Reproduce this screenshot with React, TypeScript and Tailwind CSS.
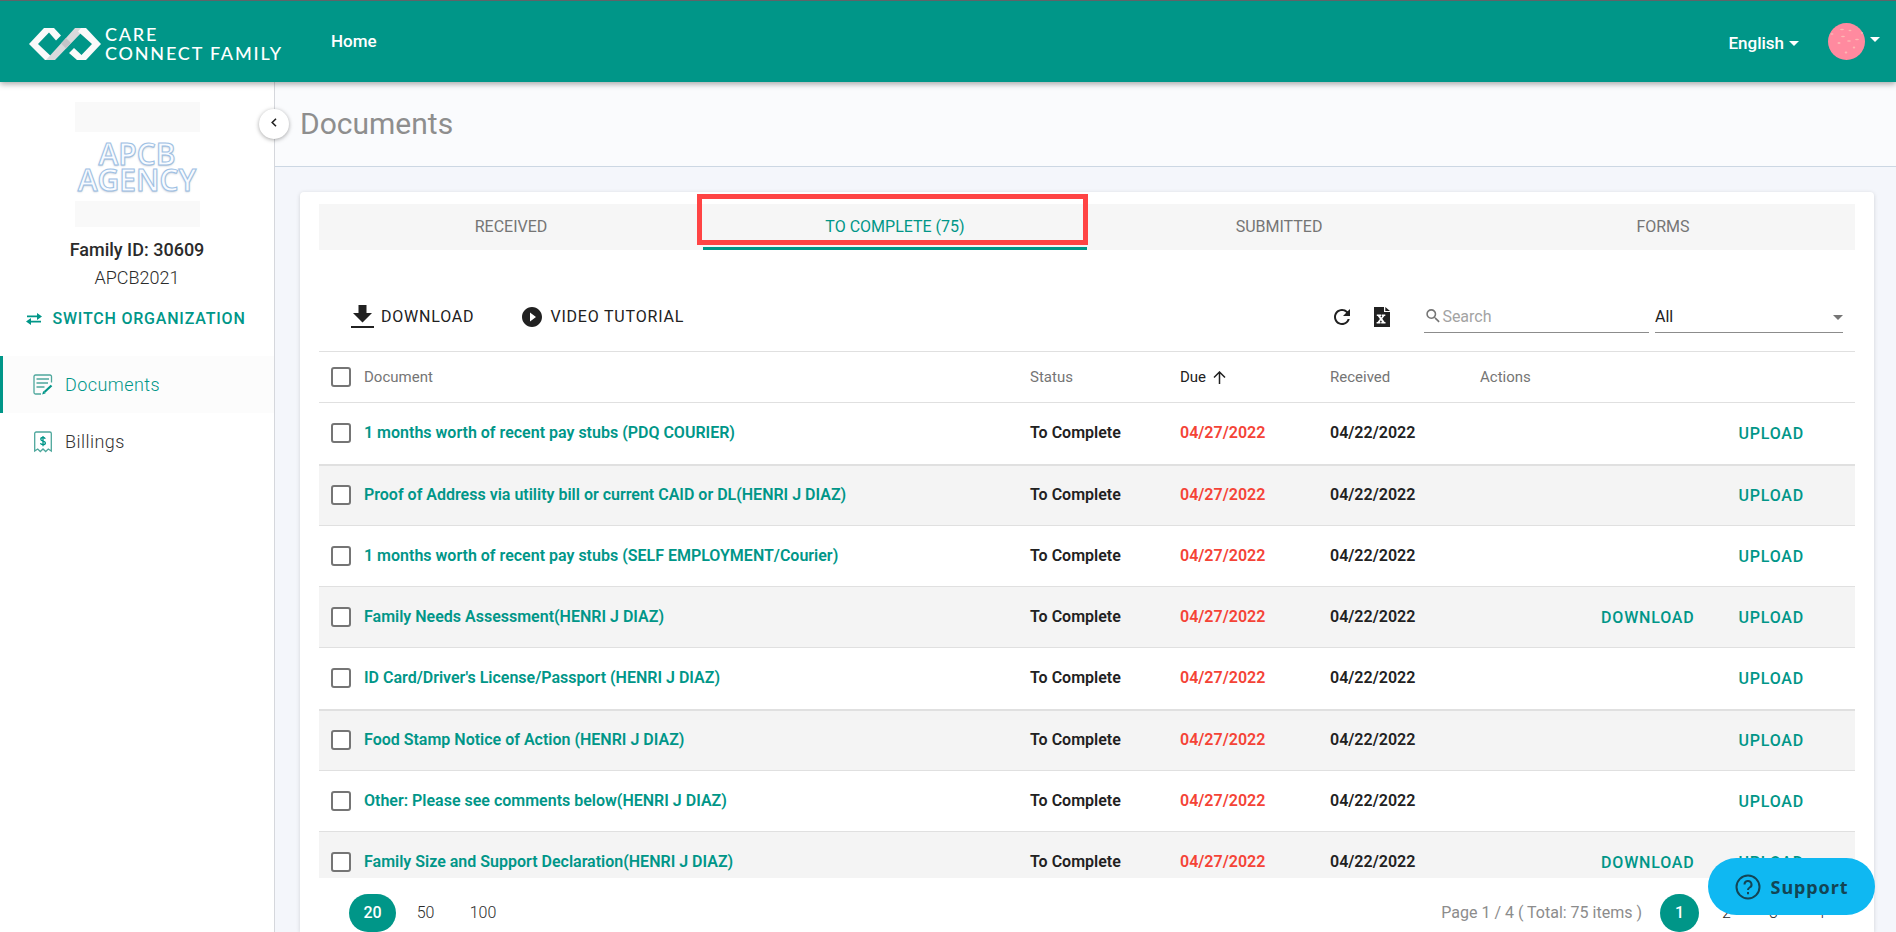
import type { ReactNode } from 'react';
import { MdPlayCircleFilled, MdRefresh, MdSearch } from 'react-icons/md';

interface DocumentRow {
  name: string;
  download?: boolean;
}

const documents: DocumentRow[] = [
  { name: '1 months worth of recent pay stubs (PDQ COURIER)' },
  { name: 'Proof of Address via utility bill or current CAID or DL(HENRI J DIAZ)' },
  { name: '1 months worth of recent pay stubs (SELF EMPLOYMENT/Courier)' },
  { name: 'Family Needs Assessment(HENRI J DIAZ)', download: true },
  { name: "ID Card/Driver's License/Passport (HENRI J DIAZ)" },
  { name: 'Food Stamp Notice of Action (HENRI J DIAZ)' },
  { name: 'Other: Please see comments below(HENRI J DIAZ)' },
  { name: 'Family Size and Support Declaration(HENRI J DIAZ)', download: true },
];

const tabs = ['RECEIVED', 'TO COMPLETE (75)', 'SUBMITTED', 'FORMS'];

function Caret({ className }: { className: string }) {
  return (
    <svg viewBox="0 0 10 5" className={className} fill="currentColor" aria-hidden>
      <path d="M0 0h10L5 5z" />
    </svg>
  );
}

function Logo() {
  return (
    <a href="#" className="ml-[29px] mt-1 flex items-center gap-1">
      <svg viewBox="0 0 72 32" className="h-8 w-[72px]" aria-hidden>
        <path d="M15 0H25L32 7.500 27 12.500 20 4.500 9 16 26 32H16L0 16z" fill="#fafafa" />
        <path d="M17 32 46 0H57L53 4 26 32z" fill="#d9dadc" />
        <path d="M32 15.500 37 10 42 15 37 20.500z" fill="#c3c5c8" />
        <path d="M57 32H48L40 25 45 20 52.500 27 63 16 49 3.500 52 0H57L72 16z" fill="#fafafa" />
      </svg>
      <span className="flex flex-col font-[Lato] text-lg leading-[19px] font-medium tracking-widest text-white">
        <span>CARE</span>
        <span>CONNECT FAMILY</span>
      </span>
    </a>
  );
}

function Header() {
  return (
    <header className="relative z-20 flex h-[82px] shrink-0 items-center border-t border-[#5f6368] bg-[#009688] text-white shadow-[0_2px_6px_rgba(0,0,0,0.35)]">
      <Logo />
      <a href="#" className="ml-12 text-[17px] font-medium">Home</a>
      <button type="button" className="ml-auto mt-1 flex items-center gap-[5px] text-[17px] font-medium">
        English
        <Caret className="h-[5px] w-[10px]" />
      </button>
      <button type="button" aria-label="Account" className="ml-[29px] mr-4 flex items-center gap-[5px]">
        <svg viewBox="0 0 37 37" className="size-[37px]" aria-hidden>
          <circle cx="18.500" cy="18.500" r="18.500" fill="#ff8a9f" />
          <g fill="#fcb9b4">
            <ellipse cx="14" cy="6.500" rx="2" ry=".8" />
            <ellipse cx="22" cy="7.500" rx="1.500" ry=".8" />
            <ellipse cx="15" cy="13.500" rx="2" ry=".8" />
            <ellipse cx="21" cy="18" rx="2" ry=".8" />
            <ellipse cx="29" cy="16.500" rx="2" ry=".8" />
            <ellipse cx="11" cy="20" rx="1.500" ry=".9" />
            <ellipse cx="26" cy="24.500" rx="1.200" ry=".9" />
            <ellipse cx="18" cy="29.500" rx="1.300" ry=".9" />
            <ellipse cx="4" cy="11" rx="1.500" ry=".8" />
            <ellipse cx="34" cy="10" rx="1.200" ry=".8" />
          </g>
        </svg>
        <Caret className="mb-1 h-[5px] w-[10px]" />
      </button>
    </header>
  );
}

function DocumentIcon() {
  return (
    <svg viewBox="0 0 20 22" className="h-[22px] w-5" fill="none" stroke="#4da79c" strokeWidth="1.300" aria-hidden>
      <path d="M18.500 8.500V2.500A1.500 1.500 0 0 0 17 1H2.500A1.500 1.500 0 0 0 1 2.500v16A1.500 1.500 0 0 0 2.500 20H8M3.500 5H16M3.500 9H15M3.500 13h8" />
      <path d="M18.500 11.500 11.500 18" stroke="#009688" strokeWidth="2.200" />
      <path d="M9.200 20.500l1-3.500 2.500 2.300z" fill="#009688" stroke="none" />
    </svg>
  );
}

function BillingIcon() {
  return (
    <svg viewBox="0 0 20 22" className="h-[22px] w-5" fill="none" stroke="#4da79c" strokeWidth="1.300" aria-hidden>
      <path d="M1.700 20V2.500A1.500 1.500 0 0 1 3.200 1h13.600a1.500 1.500 0 0 1 1.500 1.500V20l-3-2-2.600 2.500L10 18l-2.700 2.500L4.700 18z" />
      <path
        d="M12.200 7.800C12 6.800 11.200 6.500 10 6.500c-1.300 0-2.200.6-2.200 1.700 0 2.500 4.600 1.300 4.600 3.700 0 1.200-1 1.800-2.400 1.800-1.400 0-2.300-.5-2.500-1.600M10 5v10.300"
        stroke="#009688"
      />
    </svg>
  );
}

function SwitchIcon() {
  return (
    <svg viewBox="0 0 16 12" className="h-3 w-4" fill="currentColor" aria-hidden>
      <path d="M1 2.500h10V0l5 3.500L11 7V4.300H1zM15 7.700H5V5L0 8.500 5 12V9.500h10z" />
    </svg>
  );
}

function ExcelIcon() {
  return (
    <svg viewBox="0 0 16 20" className="h-5 w-4" aria-hidden>
      <path d="M0 0h10v5h6v15H0zM11.300 0 16 4H11.300z" fill="currentColor" />
      <path
        d="M2.800 7.500H7v1.400h-.7L7.300 10.500l1.100-1.600h-.8V7.500h3.700v1.400h-.9L8.300 11.800l2.300 3.300h.9v1.400H7.200v-1.400H8L6.900 13.300 5.700 15.100h.8v1.400H2.600v-1.400h1L5.900 11.900 3.800 8.900h-1z"
        fill="#fff"
      />
    </svg>
  );
}

function Sidebar() {
  return (
    <aside className="relative z-10 w-[275px] shrink-0 border-r border-[#d5d7dc] bg-white">
      <button
        type="button"
        aria-label="Collapse menu"
        className="absolute -right-[15px] top-[27px] flex size-[30px] items-center justify-center rounded-full bg-white text-[#212121] shadow-[0_1px_4px_rgba(0,0,0,0.35)]"
      >
        <svg viewBox="0 0 6 9" className="mb-1 h-[9px] w-1.5" fill="none" stroke="currentColor" strokeWidth="1.600" aria-hidden>
          <path d="M5 .7 1.200 4.500 5 8.300" />
        </svg>
      </button>

      <div className="flex flex-col items-center pt-5 text-[#2b2b2b]">
        <div className="flex h-[125px] w-[125px] flex-col justify-between">
          <div className="h-[30px] bg-[#f9f9f9]" />
          <p className="text-center font-['Open_Sans'] text-3xl leading-[26px] font-semibold text-[#f8fbff] [-webkit-text-stroke:1px_#9dc0e4] [text-shadow:0_1px_2px_rgba(90,110,140,0.45)]">
            APCB
            <br />
            AGENCY
          </p>
          <div className="h-[26px] bg-[#f9f9f9]" />
        </div>
        <p className="mt-[9px] text-lg leading-7 font-medium">Family ID: 30609</p>
        <p className="text-lg leading-[27px] font-light">APCB2021</p>
        <button type="button" className="mt-3 flex h-8 items-center gap-[10px] pr-0.5 text-base font-medium tracking-wider text-[#009688]">
          <SwitchIcon />
          SWITCH ORGANIZATION
        </button>
      </div>

      <nav className="mt-[21px] text-lg font-light tracking-wide">
        <a href="#" className="flex h-[57px] items-center gap-3 border-l-3 border-[#009688] bg-[#fcfcfc] pl-[30px] text-[#009688]">
          <DocumentIcon />
          Documents
        </a>
        <a href="#" className="flex h-[57px] items-center gap-3 border-l-3 border-transparent pl-[30px] text-[#333]">
          <BillingIcon />
          Billings
        </a>
      </nav>
    </aside>
  );
}

function Tabs() {
  return (
    <div role="tablist" className="grid shrink-0 grid-cols-4 bg-[#f6f6f6]">
      {tabs.map((tab, i) => (
        <div key={tab} className="relative flex">
          <button
            type="button"
            role="tab"
            aria-selected={i === 1}
            className={
              i === 1
                ? 'h-[46px] flex-1 border-b-3 border-[#009688] pt-[3px] text-base text-[#009688]'
                : 'h-[46px] flex-1 text-base text-[#757575]'
            }
          >
            {tab}
          </button>
          {i === 1 && (
            <div className="pointer-events-none absolute -left-1.5 -right-px -top-2.5 bottom-[5px] border-5 border-[#ff4444]" />
          )}
        </div>
      ))}
    </div>
  );
}

function Toolbar() {
  return (
    <div className="flex h-[101px] shrink-0 items-center pl-8 pr-3 pt-8 text-base text-[#212121]">
      <button type="button" className="flex items-center gap-[7px] tracking-wider">
        <svg viewBox="0 0 23 23" className="size-[23px]" fill="currentColor" aria-hidden>
          <path d="M7.500 0h8v8H21l-9.500 9.500L2 8h5.500zM0 21h23v2H0z" />
        </svg>
        DOWNLOAD
      </button>
      <button type="button" className="ml-[46px] flex items-center gap-1.5 tracking-wider">
        <MdPlayCircleFilled className="size-6" aria-hidden />
        VIDEO TUTORIAL
      </button>
      <div className="ml-auto flex items-center">
        <button type="button" aria-label="Refresh"><MdRefresh className="size-6" /></button>
        <button type="button" aria-label="Export to Excel" className="ml-5">
          <ExcelIcon />
        </button>
        <label className="ml-[34px] flex h-8 w-[225px] items-center border-b border-[#8c8c8c]">
          <MdSearch className="size-5 text-[#757575]" aria-hidden />
          <input type="text" aria-label="Search" placeholder="Search" className="w-full pt-0.5 outline-none placeholder:text-[#a3a3a3]" />
        </label>
        <div className="relative ml-1.5 w-[188px]">
          <select aria-label="Filter" className="h-8 w-full appearance-none border-b border-[#8c8c8c] bg-transparent pt-0.5 outline-none">
            <option>All</option>
          </select>
          <Caret className="pointer-events-none absolute right-0 top-3.5 h-[5px] w-[10px] text-[#757575]" />
        </div>
      </div>
    </div>
  );
}

function Checkbox({ label }: { label: string }) {
  return (
    <input
      type="checkbox"
      aria-label={label}
      className="block size-5 appearance-none rounded-[3px] border-2 border-[#757575] bg-white"
    />
  );
}

function TextButton({ children }: { children: ReactNode }) {
  return (
    <button type="button" className="pt-0.5 text-base font-medium tracking-wider text-[#009688]">
      {children}
    </button>
  );
}

function DocumentTable() {
  return (
    <div className="min-h-0 flex-1 overflow-hidden">
      <table className="w-full table-fixed border-collapse text-left">
        <colgroup>
          <col className="w-[33px]" />
          <col />
          <col className="w-[150px]" />
          <col className="w-[150px]" />
          <col className="w-[150px]" />
          <col className="w-[387px]" />
        </colgroup>
        <thead>
          <tr className="h-[51px] border-y border-[#e0e0e0] text-[15px] text-[#757575]">
            <th className="pl-3"><Checkbox label="Select all" /></th>
            <th className="pl-3 font-normal">Document</th>
            <th className="pl-3 font-normal">Status</th>
            <th className="pl-3 font-normal text-[#212121]">
              <span className="flex items-center gap-[7px]">
                Due
                <svg viewBox="0 0 13 13" className="size-[13px]" fill="none" stroke="currentColor" strokeWidth="1.500" aria-hidden>
                  <path d="M6.500 13V1M1 6.500l5.500-5.500L12 6.500" />
                </svg>
              </span>
            </th>
            <th className="pl-3 font-normal">Received</th>
            <th className="pl-3 font-normal">Actions</th>
          </tr>
        </thead>
        <tbody>
          {documents.map((doc) => (
            <tr
              key={doc.name}
              className="h-[61px] border-b border-[#e0e0e0] text-base font-semibold text-[#212121] even:bg-[#f4f4f4] nth-[4n+1]:h-[62px] nth-[4n+1]:border-b-2"
            >
              <td className="pl-3"><Checkbox label={`Select ${doc.name}`} /></td>
              <td className="pl-3"><a href="#" className="text-[#009688]">{doc.name}</a></td>
              <td className="pl-3">To Complete</td>
              <td className="pl-3 text-[#f44336]">04/27/2022</td>
              <td className="pl-3">04/22/2022</td>
              <td>
                <span className="flex justify-end gap-11 pr-[51px]">
                  {doc.download && <TextButton>DOWNLOAD</TextButton>}
                  <TextButton>UPLOAD</TextButton>
                </span>
              </td>
            </tr>
          ))}
        </tbody>
      </table>
    </div>
  );
}

function Pager() {
  return (
    <div className="flex h-[54px] shrink-0 items-end pl-[30px] pr-[15px] text-base text-[#2b2b2b]">
      <button type="button" className="h-[38px] w-[47px] rounded-full bg-[#009688] font-medium text-white">20</button>
      <button type="button" className="ml-1.5 h-[38px] w-[47px] font-light">50</button>
      <button type="button" className="ml-1.5 h-[38px] w-14 font-light">100</button>
      <span className="ml-auto mr-[18px] leading-[38px] text-[#8c8c8c]">Page 1 / 4 ( Total: 75 items )</span>
      <button type="button" className="h-[38px] w-[39px] rounded-full bg-[#009688] font-medium text-white">1</button>
      {[2, 3, 4].map((page) => (
        <button key={page} type="button" className="ml-2 h-[38px] w-[39px] font-light">{page}</button>
      ))}
    </div>
  );
}

function SupportButton() {
  return (
    <button
      type="button"
      className="fixed bottom-[17px] right-[21px] z-30 flex h-[57px] w-[167px] items-center justify-center gap-[10px] rounded-full bg-[#0fb8f2] font-['Noto_Sans'] text-lg font-bold tracking-wider text-[#134555]"
    >
      <svg viewBox="0 0 26 26" className="size-[26px]" fill="none" stroke="currentColor" strokeWidth="2" aria-hidden>
        <circle cx="13" cy="13" r="11.500" />
        <path d="M9.500 10.500a3.500 3.500 0 1 1 5.200 3c-1.200.7-1.700 1.200-1.700 2.600" />
        <path d="M13 18v2.200" />
      </svg>
      Support
    </button>
  );
}

export default function App() {
  return (
    <div className="flex h-screen flex-col overflow-hidden bg-[#f4f6fb] font-[Roboto,sans-serif]">
      <Header />
      <div className="flex min-h-0 flex-1">
        <Sidebar />
        <main className="flex min-w-0 flex-1 flex-col">
          <div className="h-[85px] shrink-0 border-b border-[#ccd7e3] bg-[#fafbfd] pl-[25px] pt-[23px]">
            <h1 className="text-3xl leading-[38px] text-[#8e8e8e]">Documents</h1>
          </div>
          <div className="ml-[25px] mr-[22px] mt-[25px] flex min-h-0 flex-1 flex-col rounded-t bg-white px-[19px] pt-3 shadow-[0_1px_4px_rgba(0,0,0,0.15)]">
            <Tabs />
            <Toolbar />
            <DocumentTable />
            <Pager />
          </div>
        </main>
      </div>
      <SupportButton />
    </div>
  );
}
